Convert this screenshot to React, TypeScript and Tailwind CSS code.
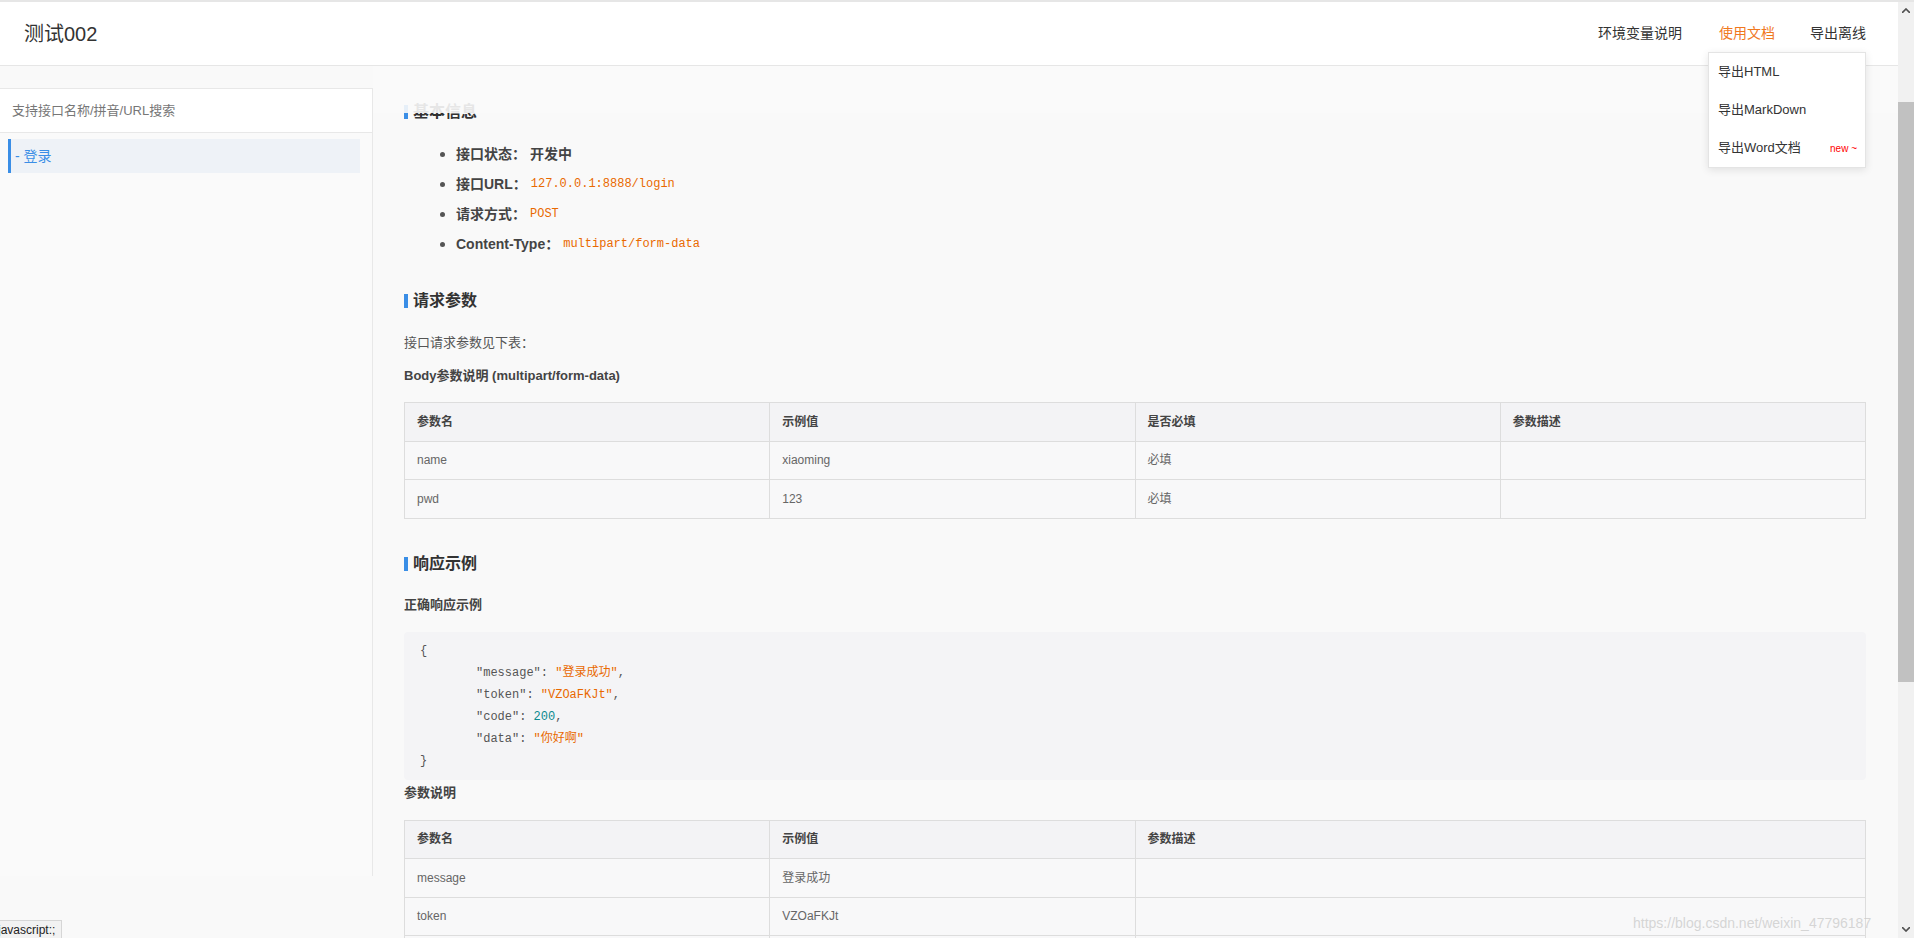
import React from "react";

const sans = "font-['Liberation_Sans','Noto_Sans_CJK_SC',sans-serif]";
const mono = "font-['Liberation_Mono','Noto_Sans_CJK_SC',monospace]";

function SectionTitle({ children }: { children: React.ReactNode }) {
  return (
    <div className="flex items-center h-[24px]">
      <span className="w-[4px] h-[14px] bg-[#3a8ee6]" />
      <span className="ml-[5px] text-[16px] font-bold text-[#333]">{children}</span>
    </div>
  );
}

function ParamTable({
  cols,
  widths,
  rows,
}: {
  cols: string[];
  widths: string[];
  rows: string[][];
}) {
  return (
    <table className="w-full border-collapse table-fixed text-[12px]">
      <colgroup>
        {widths.map((w, i) => (
          <col key={i} style={{ width: w }} />
        ))}
      </colgroup>
      <thead>
        <tr className="bg-[#f3f3f5]">
          {cols.map((c) => (
            <th
              key={c}
              className="h-[38.5px] border border-[#dddddd] px-[12px] text-left font-bold text-[#444]">
              {c}
            </th>
          ))}
        </tr>
      </thead>
      <tbody>
        {rows.map((r, i) => (
          <tr key={i} className="bg-[#f8f8f9]">
            {cols.map((_, j) => (
              <td key={j} className="h-[38.5px] border border-[#dddddd] px-[12px] text-[#666]">
                {r[j] || ""}
              </td>
            ))}
          </tr>
        ))}
      </tbody>
    </table>
  );
}

export default function App() {
  const info = [
    { label: "接口状态：", value: "开发中", code: false },
    { label: "接口URL：", value: "127.0.0.1:8888/login", code: true },
    { label: "请求方式：", value: "POST", code: true },
    { label: "Content-Type：", value: "multipart/form-data", code: true },
  ];

  return (
    <div className={`relative h-[938px] w-full overflow-hidden bg-[#f9f9f9] border-t-2 border-[#e6e6e6] flex ${sans}`}>
      <div className="flex-1 min-w-0 flex flex-col">
        {/* Header */}
        <div className="relative h-[64px] shrink-0 bg-white border-b border-[#e6e6e6] flex items-center justify-between pl-[24px] pr-[32px]">
          <div className="text-[20px] text-[#333]">测试002</div>
          <div className="flex items-center text-[14px] text-[#333]">
            <span>环境变量说明</span>
            <span className="ml-[37px] text-[#f0781e]">使用文档</span>
            <span className="ml-[35px]">导出离线</span>
          </div>

          {/* dropdown */}
          <div className="absolute right-[32px] top-[50px] z-20 w-[158px] bg-white border border-[#e4e4e4] shadow-[0_2px_8px_rgba(0,0,0,0.1)] text-[13px] text-[#333]">
            <div className="h-[38px] flex items-center pl-[9px]">导出HTML</div>
            <div className="h-[38px] flex items-center pl-[9px]">导出MarkDown</div>
            <div className="h-[38px] flex items-center justify-between pl-[9px] pr-[8px]">
              <span>导出Word文档</span>
              <span className="text-[10px] text-[#ff0000]">new ~</span>
            </div>
          </div>
        </div>

        {/* Body */}
        <div className="flex flex-1 min-h-0">
          {/* Sidebar */}
          <div className="w-[373px] shrink-0 mt-[22px] h-[788px] bg-[#fafafa] border-t border-r border-[#e8e8e8]">
            <div className="h-[44px] bg-white border-b border-[#e8e8e8] flex items-center pl-[12px] text-[13px] text-[#777]">
              支持接口名称/拼音/URL搜索
            </div>
            <div className="pt-[6px] pl-[8px] pr-[12px]">
              <div className="h-[34px] flex items-center bg-[#eef2f7] border-l-[3px] border-[#3a8ee6] pl-[4px] text-[14px] text-[#3a8ee6]">
                - 登录
              </div>
            </div>
          </div>

          {/* Main */}
          <div className="relative flex-1 min-w-0 pl-[31px] pr-[32px] pt-[34px]">
            <div className="absolute left-0 right-0 top-0 h-[47px] bg-[#f9f9f9]/90 z-10" />

            <SectionTitle>基本信息</SectionTitle>

            <div className="mt-[15px] pl-[36px]">
              {info.map((it) => (
                <div key={it.label} className="h-[30px] flex items-center">
                  <span className="w-[5px] h-[5px] rounded-full bg-[#555]" />
                  <span className="ml-[11px] text-[14px] font-bold text-[#444]">{it.label}</span>
                  {it.code ? (
                    <span className={`ml-[4px] text-[12px] text-[#e96900] ${mono}`}>{it.value}</span>
                  ) : (
                    <span className="ml-[4px] text-[14px] font-bold text-[#444]">{it.value}</span>
                  )}
                </div>
              ))}
            </div>

            <div className="mt-[30px]">
              <SectionTitle>请求参数</SectionTitle>
            </div>
            <div className="mt-[20px] h-[20px] flex items-center text-[13px] text-[#555]">接口请求参数见下表：</div>
            <div className="mt-[13px] h-[20px] flex items-center text-[13px] font-bold text-[#444]">
              Body参数说明 (multipart/form-data)
            </div>
            <div className="mt-[16px]">
              <ParamTable
                cols={["参数名", "示例值", "是否必填", "参数描述"]}
                widths={["25%", "25%", "25%", "25%"]}
                rows={[
                  ["name", "xiaoming", "必填", ""],
                  ["pwd", "123", "必填", ""],
                ]}
              />
            </div>

            <div className="mt-[33px]">
              <SectionTitle>响应示例</SectionTitle>
            </div>
            <div className="mt-[19px] h-[20px] flex items-center text-[13px] font-bold text-[#444]">正确响应示例</div>

            <div className={`mt-[17px] bg-[#f4f4f6] rounded-[4px] py-[8px] pl-[16px] text-[12px] leading-[22px] text-[#555] ${mono}`}>
              <div>{"{"}</div>
              <div className="pl-[56px]">
                "message": <span className="text-[#e96900]">"登录成功"</span>,
              </div>
              <div className="pl-[56px]">
                "token": <span className="text-[#e96900]">"VZOaFKJt"</span>,
              </div>
              <div className="pl-[56px]">
                "code": <span className="text-[#0c8a8f]">200</span>,
              </div>
              <div className="pl-[56px]">
                "data": <span className="text-[#e96900]">"你好啊"</span>
              </div>
              <div>{"}"}</div>
            </div>

            <div className="mt-[3px] h-[20px] flex items-center text-[13px] font-bold text-[#444]">参数说明</div>
            <div className="mt-[17px]">
              <ParamTable
                cols={["参数名", "示例值", "参数描述"]}
                widths={["25%", "25%", "50%"]}
                rows={[
                  ["message", "登录成功", ""],
                  ["token", "VZOaFKJt", ""],
                  ["", "", ""],
                ]}
              />
            </div>
          </div>
        </div>
      </div>

      {/* Scrollbar */}
      <div className="relative w-[16px] shrink-0 bg-[#f1f1f1]">
        <div className="h-[17px] flex items-center justify-center">
          <svg width="8" height="5" viewBox="0 0 8 5">
            <path d="M0 5 L4 1 L8 5" fill="none" stroke="#505050" strokeWidth="1.6" />
          </svg>
        </div>
        <div className="absolute left-0 right-0 top-[100px] h-[580px] bg-[#c1c1c1]" />
        <div className="absolute left-0 right-0 bottom-0 h-[17px] flex items-center justify-center">
          <svg width="8" height="5" viewBox="0 0 8 5">
            <path d="M0 0 L4 4 L8 0" fill="none" stroke="#505050" strokeWidth="1.6" />
          </svg>
        </div>
      </div>

      {/* status bar */}
      <div className="absolute left-0 bottom-0 h-[18px] w-[62px] bg-[#f2f2f2] border-t border-r border-[#d6d6d6] overflow-hidden flex items-center text-[12px] text-[#222] z-30">
        <span className="-ml-[2px]">javascript:;</span>
      </div>

      {/* watermark */}
      <div className="absolute left-[1633px] top-[911px] text-[14px] text-[#cccccc]/80 whitespace-nowrap z-30 pointer-events-none">
        https://blog.csdn.net/weixin_47796187
      </div>
    </div>
  );
}
